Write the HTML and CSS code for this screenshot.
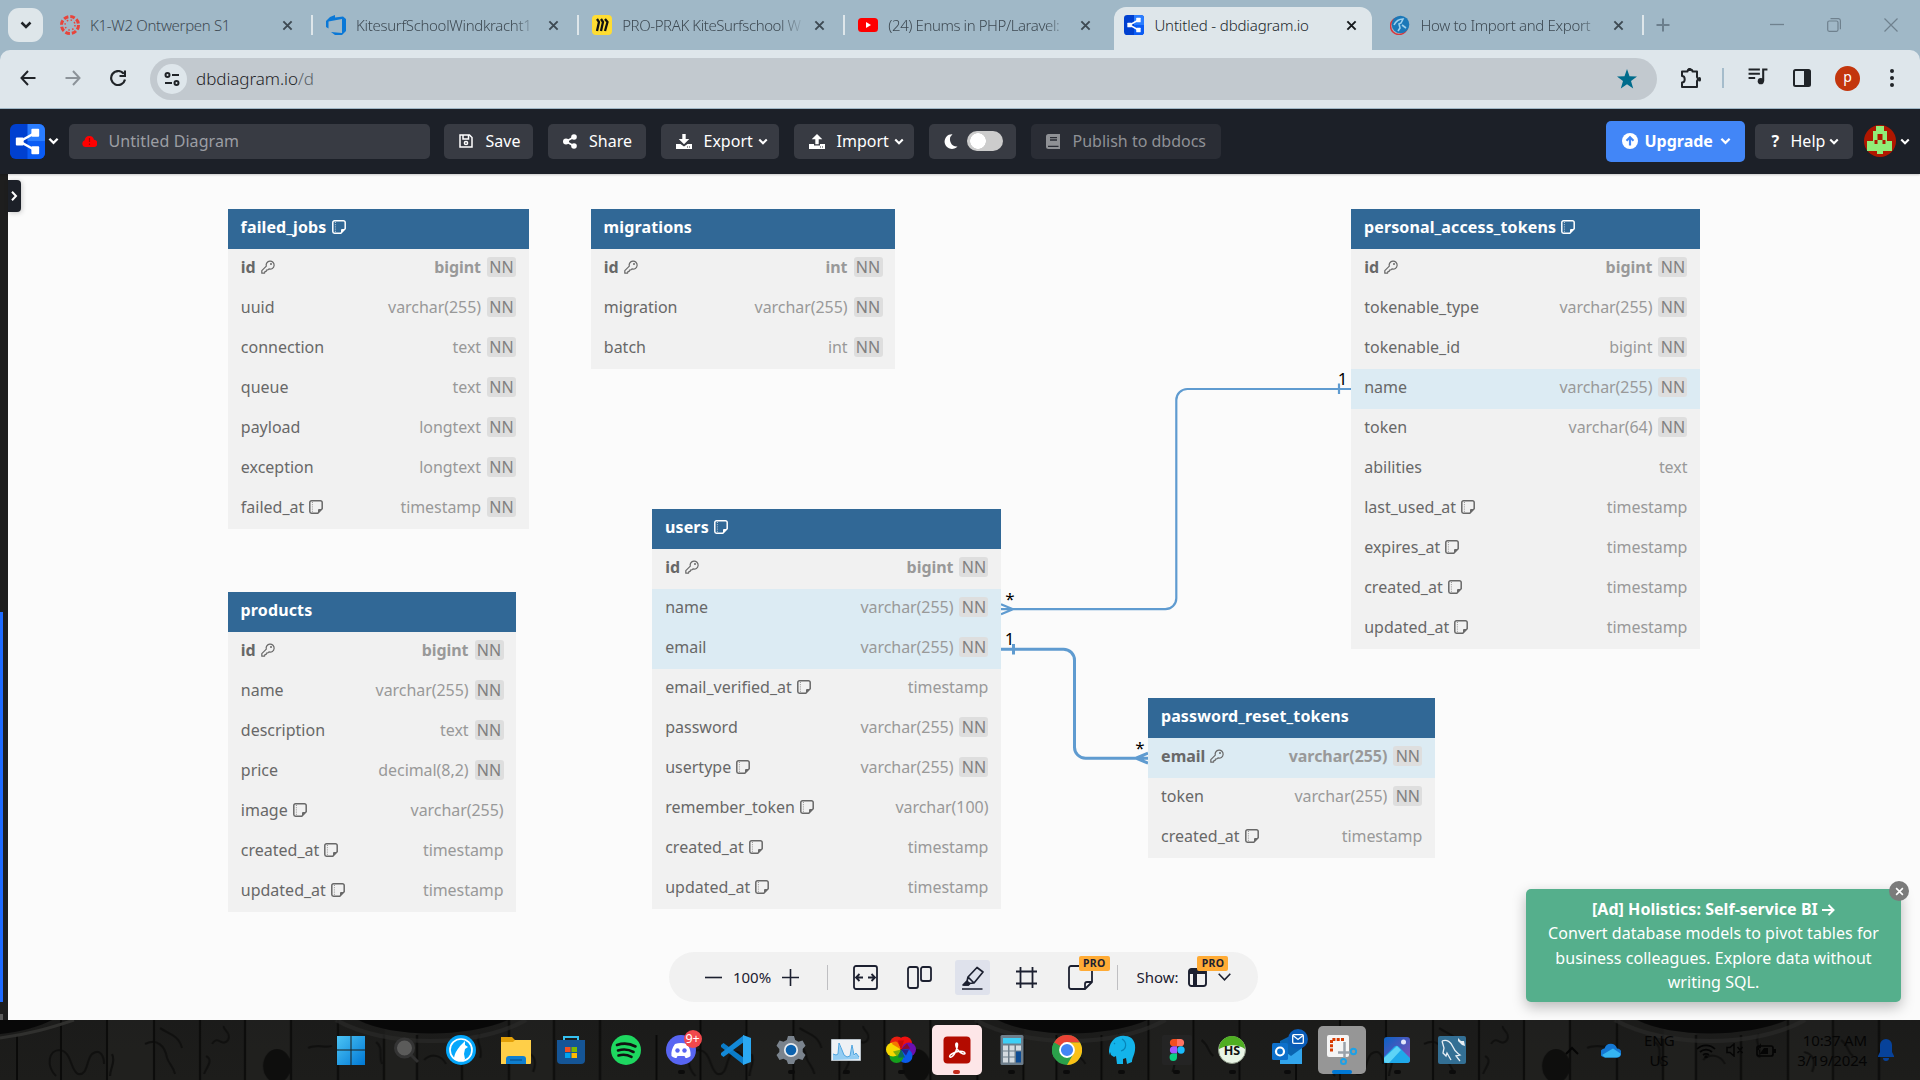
FILE: index.html
```html
<!DOCTYPE html>
<html lang="en">
<head>
<meta charset="utf-8">
<title>Untitled - dbdiagram.io</title>
<link rel="stylesheet" href="styles.css">
</head>
<body>
<svg class="defs" aria-hidden="true">
  <symbol id="x" viewBox="0 0 12 12"><path d="M1.500 1.500l9 9M10.500 1.500l-9 9" fill="none" stroke="currentColor" stroke-width="2.100"/></symbol>
  <symbol id="chev" viewBox="0 0 12 8"><path d="M1.500 1.500L6 6l4.500-4.500" fill="none" stroke="currentColor" stroke-width="2.500"/></symbol>
  <symbol id="note" viewBox="0 0 14 14"><path d="M2.500 .8h9a1.700 1.700 0 0 1 1.700 1.700v6.300l-4.400 4.400H2.500A1.700 1.700 0 0 1 .8 11.500v-9A1.700 1.700 0 0 1 2.500 .8z" fill="none" stroke="currentColor" stroke-width="1.500"/><path d="M13 9H10a1 1 0 0 0-1 1v3z" fill="currentColor"/><path d="M3.400 2v10" stroke="currentColor" stroke-dasharray="1 1.200" opacity=".7"/></symbol>
  <symbol id="key" viewBox="0 0 14 14"><path d="M5.300 6.200A4 4 0 1 1 8 8.900L6.700 10 5.400 10.100 5.200 11.500 3.900 11.700 3.600 13.200H.8V10.700z" fill="none" stroke="currentColor" stroke-width="1.200" stroke-linejoin="round"/><circle cx="10" cy="4" r="1" fill="currentColor"/></symbol>
  <symbol id="logo" viewBox="0 0 36 36"><rect width="36" height="36" rx="6" fill="#0040d0"/><path d="M18 0h12a6 6 0 0 1 6 6v12H18z" fill="#2a7dff"/><path d="M18 18h18v12a6 6 0 0 1-6 6H18z" fill="#0a5cf5"/><path d="M26 9L10 18l16 9" fill="none" stroke="#fff" stroke-width="2.600"/><rect x="6" y="14" width="8" height="8" rx="1" fill="#fff"/><rect x="22" y="5" width="8" height="8" rx="1" fill="#fff"/><rect x="22" y="23" width="8" height="8" rx="1" fill="#fff"/></symbol>
</svg>

<div class="tabstrip">
  <div class="tab-search"><svg width="12" height="8"><use href="#chev"/></svg></div>
  <div class="tab first">
    <svg class="fav" viewBox="0 0 20 20"><circle cx="10" cy="10" r="8.500" fill="none" stroke="#e8443b" stroke-width="3" stroke-dasharray="4.700 1.980"/><circle cx="10" cy="10" r="5" fill="none" stroke="#e8443b" stroke-width="1.500" stroke-dasharray="1.500 2.430"/></svg>
    <span class="tt">K1-W2 Ontwerpen S1</span><svg class="tx"><use href="#x"/></svg></div>
  <div class="tab">
    <svg class="fav" viewBox="0 0 20 20"><path d="M0 6l4-4 5-2v2.500l8-1 3 2.500v12l-4 4H9l-4-3 11 1V4L2.500 6.500v7L0 12z" fill="#0a78d7"/></svg>
    <span class="tt fade">KitesurfSchoolWindkracht1</span><svg class="tx"><use href="#x"/></svg></div>
  <div class="tab">
    <svg class="fav" viewBox="0 0 20 20"><rect width="20" height="20" rx="4" fill="#ffdd33"/><path d="M5 4l2 3-2 9M9 4l2 3-2 9M13 4l2.500 3-2.500 9" fill="none" stroke="#111" stroke-width="2.300"/></svg>
    <span class="tt fade tight">PRO-PRAK KiteSurfschool W</span><svg class="tx"><use href="#x"/></svg></div>
  <div class="tab nosep">
    <svg class="fav" viewBox="0 0 20 20"><rect y="3" width="20" height="14" rx="3.500" fill="#f00"/><path d="M8 7l5 3-5 3z" fill="#fff"/></svg>
    <span class="tt fade tight">(24) Enums in PHP/Laravel:</span><svg class="tx"><use href="#x"/></svg></div>
  <div class="tab active nosep">
    <svg class="fav"><use href="#logo"/></svg>
    <span class="tt">Untitled - dbdiagram.io</span><svg class="tx"><use href="#x"/></svg></div>
  <div class="tab">
    <svg class="fav" viewBox="0 0 20 20"><circle cx="9" cy="11" r="8.500" fill="none" stroke="#d9363b" stroke-width="1.500"/><circle cx="10.500" cy="9.500" r="8.800" fill="#1b78b8"/><path d="M4 10c2-4 5-6 9-6l-2 4-2 1 1 4-2 3M12 10l4 3" fill="none" stroke="#9fd0ec" stroke-width="1.600"/></svg>
    <span class="tt fade">How to Import and Export</span><svg class="tx"><use href="#x"/></svg></div>
  <svg class="plus" viewBox="0 0 14 14"><path d="M7 .5v13M.5 7h13" stroke="#6c7f8d" stroke-width="2"/></svg>
  <div class="win">
    <svg width="14" height="14"><path d="M0 6.500h14" stroke="#6f818e" stroke-width="1.300"/></svg>
    <svg width="14" height="14" viewBox="0 0 14 14" fill="none" stroke="#6f818e" stroke-width="1.200"><rect x=".7" y="3" width="10.300" height="10.300" rx="1.500"/><path d="M3.500 .7h8a2 2 0 0 1 1.900 2v8.500"/></svg>
    <svg width="14" height="14" viewBox="0 0 14 14"><path d="M.5 .5l13 13M13.500 .5l-13 13" stroke="#6f818e" stroke-width="1.200"/></svg>
  </div>
</div>

<div class="toolbar">
  <svg class="nav" viewBox="0 0 16 16"><path d="M15.500 8H1.500M8 1L1.500 8 8 15" fill="none" stroke="#202428" stroke-width="2"/></svg>
  <svg class="nav" viewBox="0 0 16 16"><path d="M.5 8h14M8 1l6.500 7L8 15" fill="none" stroke="#8c9399" stroke-width="2"/></svg>
  <svg class="nav" viewBox="0 0 16 16"><path d="M13.500 3.500A7 7 0 1 0 15 9.500M15 .5v5.500H9.500" fill="none" stroke="#202428" stroke-width="2.200"/></svg>
  <div class="omni">
    <div class="site"><svg width="16" height="14" viewBox="0 0 16 14" fill="none" stroke="#202428" stroke-width="2"><circle cx="3.500" cy="3" r="2"/><path d="M8 3h7M1 11h7"/><circle cx="12.500" cy="11" r="2"/></svg></div>
    <span class="url">dbdiagram.io<i>/d</i></span>
    <svg class="star" viewBox="0 0 20 20"><path d="M10 0l2.500 7.200 7.500.2-6 4.700 2.200 7.500L10 15.200 3.800 19.600 6 12.100 0 7.400l7.500-.2z" fill="#006c8c"/></svg>
  </div>
  <svg class="ext" viewBox="0 0 22 22"><path d="M2 4.500h5.500a2.500 2 0 0 1 5 0H17v5.500a2 2.500 0 0 1 0 4V20H2v-4.500a2.500 3 0 0 0 0-6.500z" fill="none" stroke="#202428" stroke-width="2" stroke-linejoin="round"/><rect x="7.500" y="1" width="4" height="3" rx="1.500" fill="#202428"/><rect x="18" y="10" width="3" height="4.500" rx="1.500" fill="#202428"/></svg>
  <i class="tsep"></i>
  <svg class="music" viewBox="0 0 20 18"><path d="M0 1.500h12M0 6h12M0 10.500h7M20 1.500h-4.500V14" fill="none" stroke="#202428" stroke-width="2.200"/><circle cx="13" cy="14" r="3.300" fill="#202428"/></svg>
  <svg class="panel" viewBox="0 0 18 18"><rect x="1" y="1" width="16" height="16" rx="1.500" fill="none" stroke="#202428" stroke-width="2"/><path d="M11 1h6v16h-6z" fill="#202428"/></svg>
  <b class="prof">p</b>
  <svg class="dots" viewBox="0 0 4 18" fill="#202428"><circle cx="2" cy="2" r="2"/><circle cx="2" cy="9" r="2"/><circle cx="2" cy="16" r="2"/></svg>
</div>

<div class="appbar">
  <svg width="35" height="35"><use href="#logo"/></svg>
  <svg class="chev logo-chev"><use href="#chev"/></svg>
  <div class="title-input"><svg width="15" height="12" viewBox="0 0 15 12"><path d="M3.500 12a3.500 3.500 0 0 1-.8-6.800A4.700 4.700 0 0 1 12 4.800 3.600 3.600 0 0 1 11.500 12z" fill="#f00"/><path d="M7.500 3v4M7.500 8.500v1.500" stroke="#a00" stroke-width="1.200"/></svg><span>Untitled Diagram</span></div>
  <div class="btn save"><svg width="14" height="14" viewBox="0 0 14 14" fill="none" stroke="#fff" stroke-width="1.500"><path d="M1 1h9.500L13 3.500V13H1z"/><path d="M4 1v4h5.500V1"/><circle cx="7" cy="9" r="1.600"/></svg><span>Save</span></div>
  <div class="btn share"><svg width="14" height="15" viewBox="0 0 14 15" fill="#fff"><circle cx="3" cy="7.500" r="3"/><circle cx="11" cy="3" r="2.800"/><circle cx="11" cy="12" r="2.800"/><path d="M11 3L3 7.500l8 4.500" fill="none" stroke="#fff" stroke-width="1.800"/></svg><span>Share</span></div>
  <div class="btn export"><svg width="16" height="15" viewBox="0 0 16 15" fill="#fff"><path d="M6.300 0h3.400v5h3.600L8 10.300 2.700 5h3.600z"/><path d="M0 10h4.500L8 12.500 11.500 10H16v5H0z"/><path d="M11 13h1M13 13h1" stroke="#383b43"/></svg><span>Export</span><svg class="chev sm"><use href="#chev"/></svg></div>
  <div class="btn import"><svg width="16" height="15" viewBox="0 0 16 15" fill="#fff"><path d="M6.300 10.300h3.400v-5h3.600L8 0 2.700 5.300h3.600z"/><path d="M0 10h5v1.500h6V10h5v5H0z"/><path d="M11 13h1M13 13h1" stroke="#383b43"/></svg><span>Import</span><svg class="chev sm"><use href="#chev"/></svg></div>
  <div class="btn theme"><svg width="14" height="15" viewBox="0 0 14 15"><path d="M8.500 .2a7.400 7.400 0 1 0 5 12.300A7 7 0 0 1 8.500 .2z" fill="#fff"/></svg><i class="switch"></i></div>
  <div class="btn publish"><svg width="14" height="15" viewBox="0 0 14 15"><path d="M2.500 0H14v15H2.500A2.500 2.500 0 0 1 0 12.500v-10A2.500 2.500 0 0 1 2.500 0z" fill="#8f9195"/><path d="M4 3.700h7M4 6h7M2 12.300h10.500" stroke="#2a2d35" stroke-width="1.300"/></svg><span>Publish to dbdocs</span></div>
  <div class="btn upgrade"><svg width="16" height="16" viewBox="0 0 16 16"><circle cx="8" cy="8" r="8" fill="#fff"/><path d="M8 12.500v-8M4.500 7.700L8 4.200l3.500 3.500" fill="none" stroke="#4286f7" stroke-width="2.200"/></svg><span>Upgrade</span><svg class="chev"><use href="#chev"/></svg></div>
  <div class="btn help"><b>?</b><span>Help</span><svg class="chev sm"><use href="#chev"/></svg></div>
  <svg class="avatar" viewBox="0 0 32 32"><circle cx="16" cy="16" r="16" fill="#b01700"/><path d="M12 1h8v5h3v10h5v10h-9v3h-6v-3H3V16h6V6h3z" fill="#90ee78"/><path d="M13.500 9h5v6h3v4h-3v-4h-5v4h-3v-4h3z" fill="#b01700"/></svg>
  <svg class="chev sm"><use href="#chev"/></svg>
</div>

<div class="canvas">
  <div class="leftstrip"><i class="blue"></i><i class="gray"></i></div>
  <div class="expander"><svg width="7" height="10" viewBox="0 0 7 10"><path d="M1 .8L5 5 1 9.200" fill="none" stroke="#fff" stroke-width="2"/></svg></div>

  <svg class="links" viewBox="0 0 1920 846">
    <g fill="none" stroke="#5f9bd0">
      <path stroke-width="2.200" d="M1001 435.200H1165.300a11 11 0 0 0 11-11V226a11 11 0 0 1 11-11H1352M1339 209.500v10.500M1013 435.200L1001 430.200M1013 435.200L1001 440.200"/>
      <path stroke-width="3" d="M1001 475.200H1063.500a11 11 0 0 1 11 11V573.200a11 11 0 0 0 11 11H1148M1013.500 470v10.500M1136 584.200L1148 579.200M1136 584.200L1148 589.200"/>
    </g>
    <g fill="#000" font-size="17" text-anchor="middle">
      <text x="1010" y="431">*</text><text x="1009.500" y="471">1</text><text x="1140" y="580">*</text><text x="1342.500" y="211">1</text>
    </g>
  </svg>

  <div class="table" style="left:228px;top:35px;width:300.500px">
    <h3>failed_jobs<svg><use href="#note"/></svg></h3>
    <div class="row pk"><span>id<svg><use href="#key"/></svg></span><em>bigint</em><b>NN</b></div>
    <div class="row"><span>uuid</span><em>varchar(255)</em><b>NN</b></div>
    <div class="row"><span>connection</span><em>text</em><b>NN</b></div>
    <div class="row"><span>queue</span><em>text</em><b>NN</b></div>
    <div class="row"><span>payload</span><em>longtext</em><b>NN</b></div>
    <div class="row"><span>exception</span><em>longtext</em><b>NN</b></div>
    <div class="row"><span>failed_at<svg><use href="#note"/></svg></span><em>timestamp</em><b>NN</b></div>
  </div>
  <div class="table" style="left:591px;top:35px;width:304px">
    <h3>migrations</h3>
    <div class="row pk"><span>id<svg><use href="#key"/></svg></span><em>int</em><b>NN</b></div>
    <div class="row"><span>migration</span><em>varchar(255)</em><b>NN</b></div>
    <div class="row"><span>batch</span><em>int</em><b>NN</b></div>
  </div>
  <div class="table" style="left:228px;top:418px;width:288px">
    <h3>products</h3>
    <div class="row pk"><span>id<svg><use href="#key"/></svg></span><em>bigint</em><b>NN</b></div>
    <div class="row"><span>name</span><em>varchar(255)</em><b>NN</b></div>
    <div class="row"><span>description</span><em>text</em><b>NN</b></div>
    <div class="row"><span>price</span><em>decimal(8,2)</em><b>NN</b></div>
    <div class="row"><span>image<svg><use href="#note"/></svg></span><em>varchar(255)</em></div>
    <div class="row"><span>created_at<svg><use href="#note"/></svg></span><em>timestamp</em></div>
    <div class="row"><span>updated_at<svg><use href="#note"/></svg></span><em>timestamp</em></div>
  </div>
  <div class="table" style="left:652.400px;top:335.400px;width:348.500px">
    <h3>users<svg><use href="#note"/></svg></h3>
    <div class="row pk"><span>id<svg><use href="#key"/></svg></span><em>bigint</em><b>NN</b></div>
    <div class="row hl"><span>name</span><em>varchar(255)</em><b>NN</b></div>
    <div class="row hl"><span>email</span><em>varchar(255)</em><b>NN</b></div>
    <div class="row"><span>email_verified_at<svg><use href="#note"/></svg></span><em>timestamp</em></div>
    <div class="row"><span>password</span><em>varchar(255)</em><b>NN</b></div>
    <div class="row"><span>usertype<svg><use href="#note"/></svg></span><em>varchar(255)</em><b>NN</b></div>
    <div class="row"><span>remember_token<svg><use href="#note"/></svg></span><em>varchar(100)</em></div>
    <div class="row"><span>created_at<svg><use href="#note"/></svg></span><em>timestamp</em></div>
    <div class="row"><span>updated_at<svg><use href="#note"/></svg></span><em>timestamp</em></div>
  </div>
  <div class="table" style="left:1351.400px;top:35px;width:348.500px">
    <h3>personal_access_tokens<svg><use href="#note"/></svg></h3>
    <div class="row pk"><span>id<svg><use href="#key"/></svg></span><em>bigint</em><b>NN</b></div>
    <div class="row"><span>tokenable_type</span><em>varchar(255)</em><b>NN</b></div>
    <div class="row"><span>tokenable_id</span><em>bigint</em><b>NN</b></div>
    <div class="row hl"><span>name</span><em>varchar(255)</em><b>NN</b></div>
    <div class="row"><span>token</span><em>varchar(64)</em><b>NN</b></div>
    <div class="row"><span>abilities</span><em>text</em></div>
    <div class="row"><span>last_used_at<svg><use href="#note"/></svg></span><em>timestamp</em></div>
    <div class="row"><span>expires_at<svg><use href="#note"/></svg></span><em>timestamp</em></div>
    <div class="row"><span>created_at<svg><use href="#note"/></svg></span><em>timestamp</em></div>
    <div class="row"><span>updated_at<svg><use href="#note"/></svg></span><em>timestamp</em></div>
  </div>
  <div class="table" style="left:1148.300px;top:524.300px;width:286.500px">
    <h3>password_reset_tokens</h3>
    <div class="row pk hl"><span>email<svg><use href="#key"/></svg></span><em>varchar(255)</em><b>NN</b></div>
    <div class="row"><span>token</span><em>varchar(255)</em><b>NN</b></div>
    <div class="row"><span>created_at<svg><use href="#note"/></svg></span><em>timestamp</em></div>
  </div>

  <div class="dock">
    <svg class="minus" viewBox="0 0 18 18"><path d="M0 9h18" stroke="#1c2030" stroke-width="1.700"/></svg>
    <span class="zoom">100%</span>
    <svg class="minus" viewBox="0 0 18 18"><path d="M0 9h18M9 0v18" stroke="#1c2030" stroke-width="1.700"/></svg>
    <i class="dsep d1"></i>
    <div class="tool"><svg width="25" height="25" viewBox="0 0 25 25" fill="none" stroke="#1c2030" stroke-width="1.800"><rect x="1" y="1" width="23" height="23" rx="2"/><path d="M3.500 12.500h6.500M6.500 9l-3.500 3.500L6.500 16M21.500 12.500H15M18.500 9l3.500 3.500-3.500 3.500"/></svg></div>
    <div class="tool"><svg width="25" height="25" viewBox="0 0 25 25" fill="none" stroke="#1c2030" stroke-width="1.800"><rect x="1" y="2" width="10" height="21" rx="2"/><rect x="14" y="2" width="10" height="14" rx="2"/></svg></div>
    <div class="tool on"><svg width="25" height="25" viewBox="0 0 25 25" fill="none" stroke="#1c2030" stroke-width="1.700" stroke-linejoin="round"><path d="M17 2.500l6 4.500-9 11-5 .5-2-2L8 12zM8 12l6 6M2 24h20.500M7 16l-4 4h5.500l1.500-1.500"/><path d="M7 16.500L4 20h4l1.500-1.500z" fill="#1c2030"/></svg></div>
    <div class="tool"><svg width="23" height="23" viewBox="0 0 23 23" fill="none" stroke="#1c2030" stroke-width="1.800"><path d="M5.500 1v21M17.500 1v21M1 5.500h21M1 17.500h21"/></svg></div>
    <div class="tool"><svg width="25" height="25" viewBox="0 0 25 25" fill="none" stroke="#1c2030" stroke-width="1.800" stroke-linejoin="round"><path d="M3 1h19a2 2 0 0 1 2 2v14l-7 7H3a2 2 0 0 1-2-2V3a2 2 0 0 1 2-2zM24 17h-5a2 2 0 0 0-2 2v5"/></svg><b class="pro">PRO</b></div>
    <i class="dsep d2"></i>
    <span class="show">Show:</span>
    <div class="tbl"><svg width="19" height="19" viewBox="0 0 19 19"><rect x="1" y="1" width="17" height="17" rx="2.500" fill="none" stroke="#1c2030" stroke-width="1.900"/><path d="M1 2h17v4H1zM5 4h4v14H5z" fill="#1c2030"/></svg><b class="pro">PRO</b></div>
    <svg class="dchev" viewBox="0 0 13 8"><path d="M.7 .8l5.800 6 5.800-6" fill="none" stroke="#1c2030" stroke-width="1.600"/></svg>
  </div>

  <div class="ad"><b>[Ad] Holistics: Self-service BI <svg width="13" height="12" viewBox="0 0 13 12"><path d="M0 6h11.500M6.500 1l5 5-5 5" fill="none" stroke="#fff" stroke-width="2"/></svg></b><br>Convert database models to pivot tables for<br>business colleagues. Explore data without<br>writing SQL.
    <i class="adx"><svg width="9" height="9"><use href="#x"/></svg></i></div>
</div>

<div class="taskbar">
  <svg class="wood" viewBox="0 0 1920 60" preserveAspectRatio="none">
    <defs>
      <linearGradient id="wg" x2="0" y2="1"><stop stop-color="#1b1b1a"/><stop offset="1" stop-color="#1d1d1b"/></linearGradient>
      <pattern id="planks" width="639.500" height="60" patternUnits="userSpaceOnUse">
        <rect width="640" height="60" fill="url(#wg)"/>
        <path d="M108 0h46v60h-46zM246 0h45v60h-45zM385 0h32v60h-32zM510 0h45v60h-45z" fill="#262624" opacity=".4"/>
        <g fill="none" stroke="#10100f" stroke-width="2.200"><path d="M56 56c-10-10-8-26 4-26 12 2 10 20 18 24 10 2 8-14 14-20 8-6 12 2 12 10M112 34c4 8-2 14-2 22M145 24c12-6 20 2 22 14 2 6 6 8 8 16M160 8c8 6 18 6 22 20M212 24c6-10 10 4 16-4 4-8-6-10-4-14M206 36c8 4 0 12-2 18M308 28c8-4 16 0 24-2M376 22c8 6 2 14 6 22M424 40c8-8 18-4 22 4M562 20c8 6 6 12 12 16M525 32c10 2 12 10 8 20M480 14c-6 8 4 14 0 24"/>
        <path d="M17 15v45M61 0v60M107 0v60M154 0v60M200 0v60M245 0v60M291 0v60M338 0v60M384 15v45M417 15v45M462 15v45M509 0v60M554 0v60M600 0v60" stroke="#0a0a09" stroke-width="2"/></g>
        <ellipse cx="277" cy="46" rx="14" ry="17" fill="#0e0e0d"/>
        <path d="M336 0c50 28 140 28 190 0" fill="none" stroke="#2a2a28" stroke-width="4" opacity=".7"/>
        <path d="M358 0c36 18 108 18 150 0z" fill="#080808"/>
      </pattern>
    </defs>
    <rect width="1920" height="60" fill="url(#planks)"/>
    <path d="M0 14C22 12 40 6 52 0H0z" fill="#080808"/><path d="M0 18C30 14 50 8 74 0" fill="none" stroke="#30302e" stroke-width="3"/>
  </svg>
  <div class="apps">
    <div class="app"><svg viewBox="0 0 30 30"><defs><linearGradient id="wb" x2="1" y2="1"><stop stop-color="#4cc4f5"/><stop offset="1" stop-color="#0078d4"/></linearGradient></defs><path d="M1 1h13.500v13.500H1zM15.500 1H29v13.500H15.500zM1 15.500h13.500V30H1zM15.500 15.500H29V30H15.500z" fill="url(#wb)"/></svg></div>
    <div class="app"><svg viewBox="0 0 30 30"><path d="M20 20l7 7" stroke="#303030" stroke-width="3"/><circle cx="13.500" cy="13" r="9" fill="#5b5b5a" stroke="#343434" stroke-width="3"/></svg></div>
    <div class="app"><svg viewBox="0 0 30 30"><circle cx="15" cy="15" r="15" fill="#05a7fb"/><circle cx="15" cy="15" r="11" fill="none" stroke="#fff" stroke-width="1.700"/><path d="M8 23c1-6 4-9 6-12l5-5v4l3 2-3 2-1 5 1 5c-3 3-8 2-11-1z" fill="#fff"/></svg></div>
    <div class="app"><svg viewBox="0 0 30 30"><path d="M0 2h11l3 3h16v5H0z" fill="#e3a008"/><path d="M0 7h12l2-2h16v23a1 1 0 0 1-1 1H0z" fill="#ffcf48"/><path d="M5 29v-5a3 3 0 0 1 3-3h14a3 3 0 0 1 3 3v5z" fill="#0f7fd0"/><path d="M9 25h12" stroke="#085a9c" stroke-width="1.500"/></svg></div>
    <div class="app"><svg viewBox="0 0 30 30"><path d="M8 6V2h14v4" fill="none" stroke="#35c1f1" stroke-width="2"/><path d="M1 5h28v20a4 4 0 0 1-4 4H5a4 4 0 0 1-4-4z" fill="#155596"/><path d="M9 12h5.500v5H9z" fill="#f25022"/><path d="M15.500 12H21v5h-5.500z" fill="#7fba00"/><path d="M9 18h5.500v5H9z" fill="#00a4ef"/><path d="M15.500 18H21v5h-5.500z" fill="#ffb900"/></svg></div>
    <div class="app"><svg viewBox="0 0 30 30"><circle cx="15" cy="15" r="15" fill="#1ed760"/><path d="M6 10c6-2 13-1.500 18.500 1.500M7 15.500c5-1.500 11-1 15.500 1.500M7.500 20.500c4-1.300 9-.8 13 1.400" fill="none" stroke="#111" stroke-width="2.600" stroke-linecap="round"/></svg></div>
    <div class="app run"><svg viewBox="0 0 30 30"><circle cx="15" cy="15" r="15" fill="#5865f2"/><path d="M9 9c4-1.500 8-1.500 12 0 3 4 4 8 3.500 12-2 1.500-3 2-5 2l-1-2h-7l-1 2c-2 0-3-.5-5-2C5 17 6 13 9 9z" fill="#fff"/><circle cx="11.500" cy="15.500" r="2.200" fill="#5865f2"/><circle cx="18.500" cy="15.500" r="2.200" fill="#5865f2"/></svg><b class="badge">9+</b></div>
    <div class="app"><svg viewBox="0 0 30 30"><path d="M0 10l2.500-2L23 23v7L0 12z" fill="#0a7cc9"/><path d="M0 20l2.500 2L23 7V0L0 18z" fill="#1389d8"/><path d="M22 0l8 3v24l-8 3z" fill="#2ba8f2"/></svg></div>
    <div class="app run"><svg viewBox="0 0 30 30"><path d="M12 1h6l1.200 4 3.300 1.800 4-1.300 3 5.200L26.700 14v3l2.800 3-3 5-4-1.300-3.300 1.800L18 29h-6l-1.200-3.500L7.500 23.700l-4 1.300-3-5 2.800-3v-3L.5 10.700l3-5.200 4 1.300L10.800 5z" fill="#7a838d"/><circle cx="15" cy="15" r="6.200" fill="#0c62ae" stroke="#e6eaee" stroke-width="1.800"/></svg></div>
    <div class="app run"><svg viewBox="0 0 30 30"><path d="M.5 4.500h29v21H.5z" fill="#eef1f4" stroke="#b9c1c8"/><path d="M2 25v-6l3 1 2-1 1-9 3 5 2 5 3 2 3-1 2-9 2 9 2-3 3 4v2z" fill="#93cdf3"/><path d="M2 19l3 1 2-1 1-11 3 7 2 5 3 2 3-1 2-11 2 10 2-2 3 4" fill="none" stroke="#4fa5e0"/></svg></div>
    <div class="app run"><svg viewBox="0 0 30 30"><circle cx="11" cy="8.500" r="7" fill="#e91e10"/><circle cx="19" cy="8.500" r="7" fill="#f01010"/><circle cx="23" cy="14.500" r="7" fill="#6a10b0"/><circle cx="19.500" cy="21" r="7" fill="#0a5bea"/><circle cx="10.500" cy="21" r="7" fill="#159f1c"/><circle cx="7" cy="14.500" r="7" fill="#f6d800"/><path d="M15 14.500L6 9c1-3 4-3 6-1z" fill="#f57600"/><path d="M15 14.500l-3-9h6z" fill="#c80c0c"/><path d="M15 14.500l6-6 3 5z" fill="#8c0d30"/><path d="M15 14.500l8 0-3 6z" fill="#23208a"/><path d="M15 14.500l4 8h-7z" fill="#0a6a60"/><path d="M15 14.500l-4 7-4-5z" fill="#7fae0a"/></svg></div>
    <div class="app acro"><svg viewBox="0 0 30 30"><rect x="1.500" y="1.500" width="27" height="27" rx="4" fill="#b30b00"/><path d="M8 22c-2-2 5-5 8-5.500s7 0 7 1.700-4 .5-6.500-2.200-3.500-8-1.800-8 .3 6-1.200 9S9.500 23 8 22z" fill="none" stroke="#fff" stroke-width="1.600"/></svg></div>
    <div class="app run"><svg viewBox="0 0 30 30"><rect x="3.500" width="23" height="30" rx="1.500" fill="#6e7e8b"/><path d="M6 3h18v5.500H6z" fill="#3dcff6"/><path d="M6 10.500h5v5H6zM12.500 10.500h5v5h-5zM19 10.500h5v5h-5zM6 16.500h5v5H6zM12.500 16.500h5v5h-5zM6 22.500h5v5H6zM12.500 22.500h5v5h-5z" fill="#d4dbe0"/><path d="M19 16.500h5v11h-5z" fill="#0e4c93"/></svg></div>
    <div class="app run"><svg viewBox="0 0 30 30"><circle cx="15" cy="15" r="15" fill="#2ba14b"/><path d="M15 15L2 7.500A15 15 0 0 1 28 7.500H15z" fill="#ea4335"/><path d="M15 15l-13-7.500a15 15 0 0 0 0 15z" fill="#2ba14b"/><path d="M28 7.500H15l6.500 11.300L15 30A15 15 0 0 0 28 7.500z" fill="#fbc116"/><circle cx="15" cy="15" r="7" fill="#4285f4" stroke="#fff" stroke-width="1.800"/></svg></div>
    <div class="app run"><svg viewBox="0 0 30 30"><path d="M2 15C3 5 10 0 18 1c8 0 11 7 10 14-.5 5-3 8-3 12l-5 2-1-6-3 1v5h-6l-1-8-2 1-3-2-1-3-1 3z" fill="#13b4ea"/><path d="M15 4c5 3 5 10-1 12M8 8l-1 1" fill="none" stroke="#0785b8" stroke-width="1.200"/></svg></div>
    <div class="app run"><svg viewBox="0 0 30 30"><rect width="30" height="30" rx="2" fill="#242424"/><path d="M15 4h-4a3.700 3.700 0 0 0 0 7.300h4z" fill="#f24e1e"/><path d="M15 4h4a3.700 3.700 0 0 1 0 7.300h-4z" fill="#ff7262"/><path d="M15 11.300h-4a3.700 3.700 0 0 0 0 7.300h4z" fill="#a259ff"/><circle cx="19" cy="15" r="3.700" fill="#1abcfe"/><path d="M15 18.600h-4a3.700 3.700 0 1 0 4 3.700z" fill="#0acf83"/></svg></div>
    <div class="app run"><svg viewBox="0 0 30 30"><circle cx="15" cy="15" r="13.500" fill="#e9f4e5" stroke="#8e9a88"/><path d="M2 14a13 13 0 0 1 26 0c-8-6-18-4-26 0z" fill="#4fae22"/><text x="15" y="20" text-anchor="middle" font-size="12.500" font-weight="700" fill="#111">HS</text></svg></div>
    <div class="app run"><svg viewBox="0 0 30 30"><path d="M8 6l10-5 12 6v20H8z" fill="#0a64b0"/><path d="M8 13l11 8 11-8v16H8z" fill="#32a5ec"/><rect y="8" width="16" height="17" rx="1.500" fill="#0d70cb"/><circle cx="8" cy="16.500" r="4" fill="none" stroke="#fff" stroke-width="2.200"/></svg><i class="mail"><svg width="12" height="10" viewBox="0 0 12 10" fill="none" stroke="#fff" stroke-width="1.300"><rect x=".7" y=".7" width="10.600" height="8.600" rx="1"/><path d="M1 1.500l5 4 5-4"/></svg></i></div>
    <div class="app snip"><svg viewBox="0 0 30 30"><rect x="0" y="0" width="22" height="22" rx="2" fill="#f5f5f5"/><path d="M17 4.500H4.500V17" fill="none" stroke="#d83b01" stroke-width="3" stroke-dasharray="3 1.300"/><path d="M17.500 7v17M11 17.500h13" stroke="#9aa2aa" stroke-width="2.500"/><circle cx="26.500" cy="16.500" r="2.700" fill="none" stroke="#1da1e6" stroke-width="2"/><circle cx="16.500" cy="26.500" r="2.500" fill="none" stroke="#1da1e6" stroke-width="2"/></svg></div>
    <div class="app run"><svg viewBox="0 0 30 30"><defs><linearGradient id="ph" x2="1" y2="1"><stop stop-color="#0a62c4"/><stop offset="1" stop-color="#8a4fb8"/></linearGradient></defs><rect x="2" y="2" width="26" height="26" rx="3" fill="url(#ph)"/><path d="M2 22L12 12a3.500 3.500 0 0 1 5 0l11 11v2a3 3 0 0 1-3 3H2z" fill="#1fa9ea"/><path d="M2 23l13-12 4 4L7 28H5a3 3 0 0 1-3-3z" fill="#5ed4f7"/><circle cx="21.500" cy="7" r="2.500" fill="#e4e6fa"/></svg></div>
    <div class="app run"><svg viewBox="0 0 30 30"><rect x="1" y="1" width="28" height="28" rx="2" fill="#336f94"/><path d="M5 6c5-2 9 1 11 6s3 5 7 8l-4 1 4 5M5 6l2 7-1 5 3 3 1-3 4 7" fill="none" stroke="#e6eef4" stroke-width="1.300"/><path d="M21 3l3 3 3 0 1 5-3-1-4-4z" fill="#e6eef4"/></svg></div>
  </div>
  <div class="tray">
    <svg class="caret" viewBox="0 0 14 9"><path d="M1 8l6-6 6 6" fill="none" stroke="#050505" stroke-width="2"/></svg>
    <svg class="cloud" viewBox="0 0 20 16"><path d="M4 15.500a4.500 4.500 0 0 1-.5-9A6.500 6.500 0 0 1 16 6.500a4.500 4.500 0 0 1 0 9z" fill="#1478d4"/><path d="M1 13L12 6.500l7.500 5a4 4 0 0 1-3.500 4H4z" fill="#35b5f2"/></svg>
    <div class="lang">ENG<br>US</div>
    <svg class="wifi" viewBox="0 0 20 15" fill="none" stroke="#050505" stroke-width="1.700"><path d="M1 6a13 13 0 0 1 18 0M4 9a9 9 0 0 1 12 0M7 12a5 5 0 0 1 6 0"/><circle cx="10" cy="14" r=".8"/></svg>
    <svg class="snd" viewBox="0 0 18 14" fill="none" stroke="#050505" stroke-width="1.500"><path d="M1 4.500h3L8 1v12L4 9.500H1zM11.500 4l5 6M16.500 4l-5 6"/></svg>
    <svg class="bat" viewBox="0 0 20 14"><rect x="1" y="3" width="16" height="10" rx="2" fill="none" stroke="#050505" stroke-width="1.700"/><path d="M3 5h9v6H3zM17 6h3v4h-3zM5 0L1 7h3l-1 5 5-7H5z" fill="#050505"/></svg>
    <div class="clock">10:37 AM<br>3/19/2024</div>
    <svg class="bell" viewBox="0 0 16 22"><path d="M8 0a6 6 0 0 1 6 6v7l2 4v1H0v-1l2-4V6a6 6 0 0 1 6-6zM5 19h6a3 3 0 0 1-6 0z" fill="#07429a"/></svg>
  </div>
</div>
</body>
</html>
```
FILE: styles.css
```css
* { box-sizing: border-box; }
body { margin: 0; width: 1920px; height: 1080px; overflow: hidden; font-family: "Noto Sans", "Open Sans", sans-serif; font-size: 16px; display: flex; flex-direction: column; }
svg { display: block; flex: none; }
i, em { font-style: normal; }
.defs { position: absolute; width: 0; height: 0; }

/* browser tab strip */
.tabstrip { height: 50px; background: #a0b8c7; display: flex; align-items: flex-start; padding-left: 8px; flex: none; }
.tab-search { width: 35px; height: 34px; margin-top: 8px; border-radius: 11px; background: #dee6ea; display: grid; place-items: center; color: #202428; }
.tab { width: 266.100px; height: 50px; display: flex; align-items: center; padding: 0 17px 0 14px; position: relative; font-size: 15px; color: #3e4a53; }
.tab.first { margin-left: 3px; }
.tab::after { content: ""; position: absolute; right: -1px; top: 15px; width: 2px; height: 20px; background: #dee6ea; }
.tab.nosep::after { display: none; }
.fav { width: 20px; height: 20px; }
.tt { flex: 1; margin: -1px 9px 0 10px; white-space: nowrap; letter-spacing: -.320px; font-weight: 300; }
.fade { -webkit-mask-image: linear-gradient(90deg, #000 86%, transparent); mask-image: linear-gradient(90deg, #000 86%, transparent); }
.tight { letter-spacing: -.420px; }
.tx { width: 11px; height: 11px; margin-right: 2px; color: #3e4a53; }
.active { color: #20262b; }
.active::before { content: ""; position: absolute; left: 4px; right: 4px; top: 7px; bottom: 0; background: #dee6ea; border-radius: 12px 12px 0 0; }
.active > * { position: relative; }
.active .tt { letter-spacing: -.130px; }
.active .tx { color: #15191c; }
.plus { width: 14px; height: 14px; margin: 18px 0 0 13px; }
.win { display: flex; gap: 43px; margin: 18px 22px 0 auto; }

.toolbar { height: 59px; flex: none; background: linear-gradient(#dee6eb, #dee6eb) padding-box; border-radius: 10px 10px 0 0; border-bottom: 1px solid #a0b8c7; display: flex; align-items: center; padding: 0 0 2px 20px; }
body { background: #a0b8c7; }
.nav { width: 16px; height: 16px; margin-right: 29px; }
.omni { width: 1507px; height: 42px; border-radius: 21px; background: #c2c9cf; display: flex; align-items: center; padding: 0 20px 0 7px; margin: 1px 0 0 -5px; }
.site { width: 30px; height: 30px; border-radius: 50%; background: #dee6eb; display: grid; place-items: center; }
.url { margin-left: 9px; font-size: 17px; font-weight: 300; color: #1e2326; flex: 1; letter-spacing: -.050px; }
.url i { color: #5b6369; }
.star { width: 20px; height: 20px; }
.ext { width: 22px; height: 22px; margin-left: 23px; }
.tsep { width: 2px; height: 20px; background: #a5bccb; margin: 0 24px 0 20px; }
.music { width: 20px; height: 17px; margin-top: -4px; }
.panel { width: 18px; height: 18px; margin-left: 25px; }
.prof { width: 25px; height: 25px; border-radius: 50%; background: #c3360d; color: #fff; font-weight: 400; font-size: 14px; line-height: 21px; text-align: center; margin-left: 24px; }
.dots { width: 4px; height: 18px; margin-left: 30px; }

/* application bar */
.appbar { height: 65px; flex: none; background: #1c2028; display: flex; align-items: center; padding: 0 0 1px 9.500px; color: #fff; position: relative; z-index: 1; box-shadow: 0 1px 2px #0003; }
.chev { width: 11px; height: 8px; color: #fff; }
.chev.sm { width: 10px; height: 7px; }
.logo-chev { margin: 0 11px 0 3.500px; width: 11px; }
.title-input, .btn { height: 35px; border-radius: 5px; background: #383b43; display: flex; align-items: center; }
.title-input > span, .btn > span { position: relative; top: -.500px; }
.title-input { width: 361px; padding-left: 12.500px; gap: 12px; color: #9c9ea3; margin-right: 14px; margin-left: -1px; letter-spacing: .080px; }
.btn { padding-left: 15px; }
.save { width: 89px; gap: 12.500px; margin-right: 15px; }
.share { width: 98px; gap: 12px; margin-right: 15px; }
.export { width: 118px; gap: 11.500px; margin-right: 15px; }
.import { width: 120px; gap: 11.500px; margin-right: 15px; }
.btn .sm { margin-left: -6px; }
.theme { width: 87px; gap: 9px; margin-right: 15px; }
.switch { width: 36px; height: 20px; border-radius: 10px; background: radial-gradient(circle at 11px 10px, #fff 7.500px, #ccc 8px); }
.publish { width: 190px; gap: 12.500px; background: #2a2d35; color: #8f9195; }
.upgrade { margin-left: auto; width: 139px; height: 41px; background: #4286f7; gap: 7px; font-weight: 700; margin-right: 10px; padding-left: 16px; }
.help { width: 98px; gap: 10px; padding-left: 17px; margin-right: 11px; }
.help b { width: 9px; }
.avatar { width: 32px; height: 32px; margin-right: 4px; }
.appbar > .chev.sm { margin-right: 10.500px; }

/* diagram canvas */
.canvas { height: 846px; flex: none; background: #fbfbfb; position: relative; }
.leftstrip { position: absolute; left: 0; top: 0; width: 8px; height: 100%; background: #1e1e1e; }
.blue { position: absolute; left: 0; top: 438px; width: 3px; height: 390px; background: #1f6bff; }
.gray { position: absolute; left: 0; top: 840px; width: 3px; height: 6px; background: #5c5c5c; }
.expander { position: absolute; left: 8px; top: 6px; width: 13px; height: 32px; background: #1c2028; border-radius: 0 4px 4px 0; display: grid; place-items: center; box-shadow: 1px 1px 5px #0003; }
.links { position: absolute; left: 0; top: 0; width: 1920px; height: 846px; }
.table { position: absolute; background: #f1f1f1; }
.table h3 { margin: 0; height: 40px; background: #316896; color: #fff; font-size: 16px; font-weight: 700; display: flex; align-items: center; padding: 0 12.600px 4px; letter-spacing: .130px; }
.table svg { width: 14px; height: 14px; margin-left: 5px; }
.row { height: 40px; display: flex; align-items: center; padding: 0 12.500px 4px 12.800px; color: #686868; }
.row > span { flex: 1; display: flex; align-items: center; }
.row em { color: #999; letter-spacing: -.060px; }
.row > b { width: 29px; height: 20px; margin-left: 6px; border-radius: 3px; background: #dedede; color: #808080; font-weight: 400; line-height: 20px; text-align: center; }
.pk > span, .pk em { font-weight: 700; }
.hl { background: #dcebf3; }

.dock { position: absolute; left: 669px; top: 778px; width: 589px; height: 50px; border-radius: 25px; background: #f1f1f1; display: flex; align-items: center; padding-left: 36px; color: #1c2030; }
.minus { width: 17px; height: 17px; }
.zoom { width: 60px; text-align: center; font-size: 15px; }
.dsep { width: 1px; height: 25px; background: #bfbfc2; }
.d1 { margin: 0 20px 0 28px; }
.tool { width: 35px; height: 35px; border-radius: 3px; display: grid; place-items: center; position: relative; margin-right: 18.700px; }
.on { background: #dfe2ec; }
.pro { position: absolute; background: #ffab35; color: #1c2030; font-size: 10.500px; font-weight: 700; width: 31px; height: 15px; line-height: 15px; border-radius: 2px; text-align: center; left: 16px; top: -4px; letter-spacing: .300px; }
.d2 { margin: 0 18px 0 1px; }
.show { width: 52px; font-size: 15px; white-space: nowrap; }
.tbl { position: relative; }
.tbl .pro { left: 9px; top: -12px; }
.dchev { width: 13px; height: 8px; margin-left: 11px; }

.ad { position: absolute; left: 1526px; top: 715px; width: 375px; height: 113px; border-radius: 5px; background: #55af8c; color: #fff; text-align: center; line-height: 24.300px; padding-top: 8px; letter-spacing: .050px; box-shadow: 0 5px 14px #0004; }
.ad b svg { display: inline-block; vertical-align: -1px; }
.adx { position: absolute; right: -8px; top: -8px; width: 20px; height: 20px; border-radius: 50%; background: #7b7b7b; display: grid; place-items: center; }

/* desktop taskbar */
.taskbar { height: 60px; flex: none; position: relative; display: flex; background: #191918; }
.wood { position: absolute; inset: 0; width: 1920px; height: 60px; }
.apps { display: flex; position: relative; margin-left: 323px; }
.app { width: 55.100px; height: 60px; display: grid; place-items: center; position: relative; }
.app > svg { width: 30px; height: 30px; }
.run::after, .acro::after, .snip::after { content: ""; position: absolute; left: 24px; bottom: 6px; width: 7px; height: 4px; border-radius: 2px; background: #0b0b0b; }
.acro::before { content: ""; position: absolute; left: 2.500px; top: 5px; width: 50px; height: 50px; border-radius: 5px; background: #fde6e8; }
.acro::after { background: #c42b1c; }
.snip::before { content: ""; position: absolute; left: 3px; top: 6px; width: 48px; height: 48px; border-radius: 5px; background: #969696; }
.snip::after { background: #0078d4; left: 17px; width: 20px; }
.acro > svg, .snip > svg { position: relative; }
.badge { position: absolute; left: 30px; top: 10px; width: 18px; height: 18px; border-radius: 50%; background: #f0484c; color: #fff; font-size: 12.500px; line-height: 17px; text-align: center; font-weight: 400; }
.mail { position: absolute; left: 28px; top: 9px; width: 20px; height: 20px; border-radius: 50%; background: #0a5cb8; display: grid; place-items: center; }
.tray { position: relative; display: flex; align-items: center; margin-left: auto; color: #050505; font-size: 15px; line-height: 20px; }
.caret { width: 14px; height: 9px; margin-right: 22px; }
.cloud { width: 20px; height: 16px; margin-right: 23px; }
.lang { text-align: center; width: 30px; margin-right: 22px; }
.wifi { width: 20px; height: 15px; margin-right: 10px; }
.snd { width: 18px; height: 14px; margin-right: 12px; }
.bat { width: 20px; height: 14px; margin-right: 21px; }
.clock { text-align: right; width: 70px; margin-right: 11px; white-space: nowrap; letter-spacing: -.150px; }
.bell { width: 16px; height: 22px; margin-right: 26px; }
```
